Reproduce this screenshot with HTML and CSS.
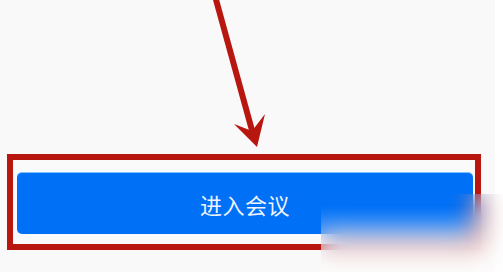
FILE: index.html
```html
<!DOCTYPE html>
<html lang="zh-CN">
<head>
    <meta charset="UTF-8">
    <meta name="viewport" content="width=device-width, initial-scale=1.0">
    <title>进入会议</title>
    <link rel="stylesheet" href="styles.css">
</head>
<body>
    <div class="screen">
        <!-- 标注箭头 -->
        <svg class="arrow" width="300" height="160" viewBox="0 0 300 160">
            <line x1="215" y1="-4" x2="253" y2="134" stroke="#b8170f" stroke-width="6"/>
            <polygon points="257,147 234,124 252,131 265,114" fill="#b8170f"/>
        </svg>
        <div class="highlight">
            <button class="join-button">进入会议</button>
        </div>
        <div class="watermark"></div>
    </div>
</body>
</html>
```

FILE: styles.css
```css
body {
    margin: 0;
    background-color: #fff;
    font-family: "Noto Sans CJK SC", "Noto Sans", sans-serif;
}
.screen {
    position: relative;
    width: 495px;
    height: 272px;
    background-color: #f9f9f9;
    padding-top: 154px;
    box-sizing: border-box;
    overflow: visible;
}
.arrow {
    position: absolute;
    left: 0;
    top: 0;
}
.highlight {
    margin-left: 7px;
    width: 474px;
    height: 96px;
    border: 6px solid #b8170f;
    box-sizing: border-box;
    padding: 12px 2px 10px 4px;
    background-color: #fafafa;
}
.join-button {
    display: block;
    width: 100%;
    height: 100%;
    border: none;
    border-top: 1px solid #7cc4ff;
    border-radius: 5px;
    background-color: #0070f6;
    color: #eef4ff;
    font-family: "Noto Sans CJK SC", "Noto Sans", sans-serif;
    font-size: 22px;
    letter-spacing: 0.5px;
    padding: 0;
}
/* 右下角模糊水印 */
.watermark {
    position: absolute;
    left: 321px;
    top: 194px;
    width: 182px;
    height: 78px;
    backdrop-filter: blur(12px);
    background: linear-gradient(to bottom, rgba(255,255,255,0) 15%, rgba(255,255,255,0.55) 100%);
}
```
